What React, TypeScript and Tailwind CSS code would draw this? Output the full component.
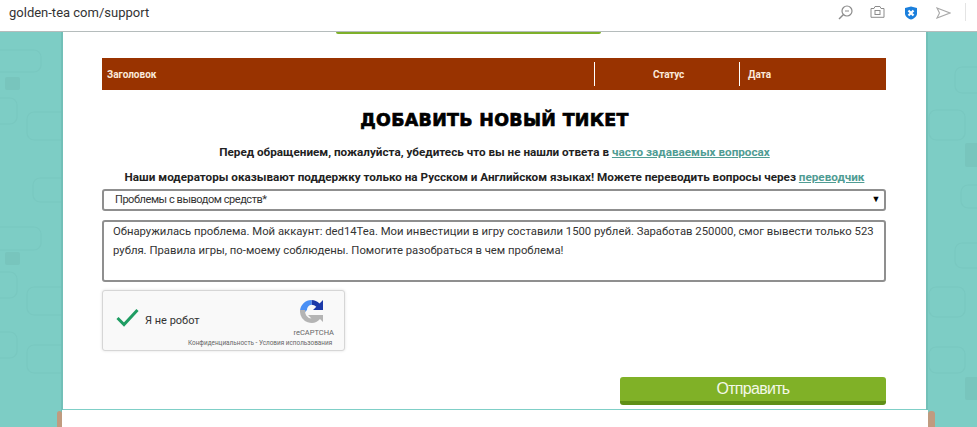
const sans = "font-['Roboto','Liberation_Sans',sans-serif]";

function Wallpaper({ side }: { side: "left" | "right" }) {
  const shapes =
    side === "left"
      ? [
          [-10, 18, 51, 22],
          [-10, 66, 27, 26],
          [27, 80, 42, 28],
          [33, 146, 36, 24],
          [-10, 195, 51, 23],
          [-10, 240, 27, 26],
          [27, 255, 42, 28],
          [-10, 300, 27, 26],
          [27, 313, 42, 28],
        ]
      : [
          [27, 35, 40, 26],
          [1, 78, 36, 30],
          [33, 153, 30, 23],
          [27, 211, 40, 25],
          [1, 255, 36, 30],
          [1, 315, 36, 26],
        ];
  const squares =
    side === "left"
      ? [
          [5, 45, 15, 13],
          [5, 220, 15, 13],
        ]
      : [
          [37, 111, 16, 24],
          [37, 345, 16, 23],
        ];
  return (
    <svg className="h-full w-full" aria-hidden="true">
      {shapes.map(([x, y, w, h]) => (
        <rect
          key={`${x}-${y}`}
          x={x}
          y={y}
          width={w}
          height={h}
          rx="7"
          fill="none"
          stroke="#79c8c0"
          strokeWidth="1.200"
        />
      ))}
      {squares.map(([x, y, w, h]) => (
        <rect key={`${x}-${y}`} x={x} y={y} width={w} height={h} rx="2" fill="#78c5bd" />
      ))}
    </svg>
  );
}

function RecaptchaLogo() {
  return (
    <svg width="25" height="25" viewBox="0 0 25 25" aria-hidden="true">
      <path d="M12.500 1a11.500 11.500 0 0 1 8 3.400L24 1v10h-10l3.300-3.300a7 7 0 0 0-4.800-2z" fill="#1c3aa9" />
      <path d="M12.500 1A11.500 11.500 0 0 0 1 12h1.500L5 14l3-3a5 5 0 0 1 4.500-5.300z" fill="#4a90f5" />
      <path d="M1 11v2a11.500 11.500 0 0 0 20 7l3 3v-7H9l3.500 3.500A6.500 6.500 0 0 1 6.500 11z" fill="#b4b4b4" />
    </svg>
  );
}

export default function App() {
  return (
    <div className={`flex h-[427px] w-[977px] flex-col overflow-hidden bg-white ${sans}`}>
      <header className="flex h-[32px] shrink-0 justify-between border-b border-[#b5bcbc] bg-white pr-[11px] pl-[9px]">
        <span className="pt-[5px] text-[13px] leading-[16px] text-[#333]">golden-tea com/support</span>
        <div className="flex items-start text-[#8c8c8c]">
          <svg className="mt-[5px]" width="15" height="15" viewBox="0 0 15 15" fill="none" stroke="currentColor" aria-hidden="true">
            <circle cx="9" cy="6" r="5" strokeWidth="1.200" />
            <path d="M7 6h4" strokeWidth="1" />
            <path d="M5.500 9.500 1 14" strokeWidth="1.500" />
          </svg>
          <svg className="mt-[5px] ml-[17px]" width="15" height="13" viewBox="0 0 15 13" fill="none" stroke="currentColor" strokeWidth="1" aria-hidden="true">
            <path d="M1 3.500h3L5 1.500h5l1 2h3v8.800H1z" />
            <rect x="5" y="5.500" width="5" height="4" />
          </svg>
          <svg className="mt-[6px] ml-[19px]" width="14" height="14" viewBox="0 0 14 14" aria-hidden="true">
            <path d="M1 2 7 .5 13 2v5.500c0 3-3 5.300-6 6-3-.7-6-3-6-6z" fill="#1b7fdc" />
            <path d="m4.500 4.500 5 5m0-5-5 5" stroke="#fff" strokeWidth="2.200" />
          </svg>
          <svg className="mt-[7px] ml-[18px]" width="15" height="12" viewBox="0 0 15 12" fill="none" stroke="#a8a8a8" strokeWidth="1.100" aria-hidden="true">
            <path d="M1 1 14 6 1 11l2.500-5z" />
          </svg>
          <div className="mt-[3px] ml-[14px] h-[18px] w-px bg-[#e4e4e4]" />
        </div>
      </header>

      <div className="flex min-h-0 flex-1 bg-[#7dcdc5]">
        <div className="h-full w-[63px] shrink-0 border-r-2 border-[#72c0b8]">
          <Wallpaper side="left" />
        </div>

        <main className="relative flex w-[863px] shrink-0 flex-col bg-white">
          <div className="ml-[273px] h-[2px] w-[265px] rounded-b bg-[#7eb02a]" />

          <div className="mt-[24px] mr-[40px] ml-[39px] flex h-[32px] items-center bg-[#993300] text-[10px] font-bold text-[#fbe9da]">
            <span className="w-[492px] pl-[5px]">Заголовок</span>
            <span className="flex h-[24px] w-[145px] items-center justify-center border-l border-white pl-[3px] tracking-[-0.2px]">Статус</span>
            <span className="flex h-[24px] flex-1 items-center border-l border-white pl-[8px]">Дата</span>
          </div>

          <h1 className="mt-[19px] text-center font-['DejaVu_Sans',sans-serif] text-[17.400px] leading-[22px] font-bold tracking-[0.35px] text-black [-webkit-text-stroke:0.7px_black]">
            ДОБАВИТЬ НОВЫЙ ТИКЕТ
          </h1>

          <p className="mt-[13px] text-center text-[11.700px] leading-[16px] font-bold text-[#222]">
            Перед обращением, пожалуйста, убедитесь что вы не нашли ответа в{" "}
            <a className="text-[#4f9c93] underline">часто задаваемых вопросах</a>
          </p>
          <p className="mt-[9px] text-center text-[11.700px] leading-[16px] font-bold text-[#222]">
            Наши модераторы оказывают поддержку только на Русском и Английском языках! Можете переводить вопросы через{" "}
            <a className="text-[#4f9c93] underline">переводчик</a>
          </p>

          <div className="mt-[4px] mr-[40px] ml-[39px] flex h-[22px] items-center justify-between rounded-[3px] border-2 border-[#8f8f8f] pr-[4px] pl-[11px] text-[11px] tracking-[-0.45px] text-[#333]">
            <span>Проблемы с выводом средств*</span>
            <span className="text-[9px] text-black">▼</span>
          </div>

          <div className="mt-[9px] mr-[40px] ml-[39px] h-[62px] rounded-[3px] border-2 border-[#8f8f8f] pr-[5px] pl-[9px] text-[11.300px] leading-[19px] text-[#333]">
            Обнаружилась проблема. Мой аккаунт: ded14Tea. Мои инвестиции в игру составили 1500 рублей. Заработав 250000, смог вывести только 523 рубля. Правила игры, по-моему соблюдены. Помогите разобраться в чем проблема!
          </div>

          <div className="mt-[8px] ml-[39px] flex h-[61px] w-[243px] rounded-[3px] border border-[#d6d6d6] bg-[#f9f9f9] shadow-[0_0_3px_rgba(0,0,0,0.12)]">
            <svg className="mt-[17px] ml-[13px]" width="23" height="19" viewBox="0 0 23 19" fill="none" stroke="#1f9d63" strokeWidth="3" aria-hidden="true">
              <path d="m1.500 10 6.500 6.500L21.500 2" />
            </svg>
            <span className="mt-[23px] ml-[6px] text-[11px] leading-[14px] text-[#333]">Я не робот</span>
            <div className="ml-auto flex flex-col items-end pr-[10px]">
              <div className="mt-[8px] mr-[10px]">
                <RecaptchaLogo />
              </div>
              <span className="mt-[4px] text-[7.500px] leading-[10px] text-[#666]">reCAPTCHA</span>
            </div>
          </div>
          <div className="relative -mt-[11px] ml-[125px] text-[6.400px] leading-[6px] text-[#666]">
            Конфиденциальность - Условия использования
          </div>

          <div className="mt-[31px] mr-[40px] ml-auto flex h-[28px] w-[266px] items-center justify-center rounded-[3px] border-b-[4px] border-[#5f8f16] bg-[#80b127] font-['Liberation_Sans',sans-serif] text-[16px] tracking-[-0.7px] text-[#f3f8e8]">
            Отправить
          </div>

          <div className="absolute right-0 bottom-0 left-0 h-[18px] border-t border-[#7fcfc7] bg-white" />
          <div className="absolute bottom-0 -left-[1px] h-[17px] w-px bg-white" />
          <div className="absolute -right-[2px] bottom-0 h-[17px] w-[2px] bg-white" />
          <div className="absolute -right-[9px] bottom-0 h-[16px] w-[7px] rounded-t-[3px] bg-[#c09b7f]" />
          <div className="absolute bottom-0 -left-[6px] h-[16px] w-[5px] rounded-t-[3px] bg-[#c09b7f]" />
        </main>

        <div className="h-full flex-1 border-l-2 border-[#72c0b8]">
          <Wallpaper side="right" />
        </div>
      </div>
    </div>
  );
}
